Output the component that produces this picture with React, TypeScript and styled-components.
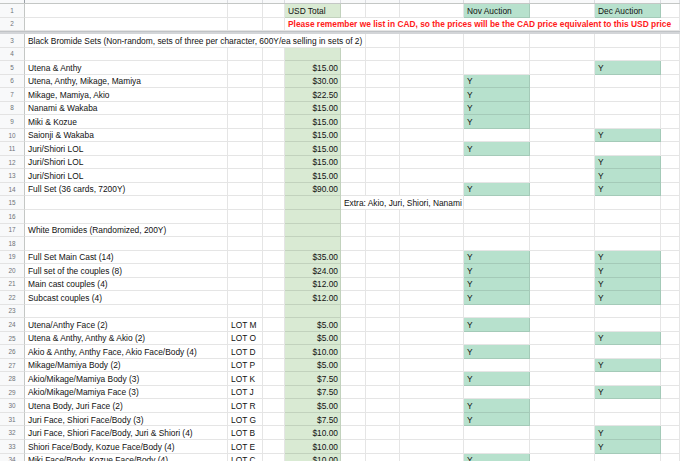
import React from "react";
import styled, { createGlobalStyle } from "styled-components";

const Global = createGlobalStyle`
  html, body { margin: 0; padding: 0; background: #fff; overflow: hidden; }
  * { box-sizing: border-box; }
`;

const COLS = "25px 203px 35px 22px 56px 25px 34px 64px 66px 65px 66px 1fr";
const ROW_H = 13.54;

const Sheet = styled.div`
  width: 680px;
  height: 461px;
  overflow: hidden;
  font-family: "Liberation Sans", Arial, sans-serif;
  font-size: 8.4px;
  color: #111;
`;

const ColHeader = styled.div`
  display: grid;
  grid-template-columns: ${COLS};
  height: 4px;
  background: #f8f9fa;
  border-bottom: 1px solid #c4c7c5;
`;

const ColHeadCell = styled.div<{ $corner?: boolean }>`
  border-right: 1px solid ${(p) => (p.$corner ? "#9aa0a6" : "#dadce0")};
`;

const Frozen = styled.div`
  height: 3px;
  background: #d3d5d8;
  border-top: 1px solid #c0c3c6;
`;

const Row = styled.div`
  display: grid;
  grid-template-columns: ${COLS};
  height: ${ROW_H}px;
`;

const RowNum = styled.div`
  background: #f8f9fa;
  border-right: 1px solid #c4c7c5;
  border-bottom: 1px solid #e3e3e3;
  color: #6f7378;
  font-size: 6.4px;
  display: flex;
  align-items: center;
  justify-content: center;
`;

const Cell = styled.div<{
  $bg?: string;
  $right?: boolean;
  $span?: number;
  $red?: boolean;
}>`
  grid-column: span ${(p) => p.$span ?? 1};
  background: ${(p) => p.$bg ?? "transparent"};
  border-right: 1px solid rgba(0, 0, 0, 0.1);
  border-bottom: 1px solid rgba(0, 0, 0, 0.1);
  padding: 1px 2px 0 3px;
  display: flex;
  align-items: center;
  justify-content: ${(p) => (p.$right ? "flex-end" : "flex-start")};
  white-space: nowrap;
  overflow: visible;
  line-height: 1;
  color: ${(p) => (p.$red ? "#ff1a1a" : "inherit")};
  font-weight: ${(p) => (p.$red ? 700 : 400)};
`;

const USD = "#d9ead3";
const MARK = "#b7e1cd";

type Item = {
  n: number;
  a?: string;
  b?: string;
  d?: string;
  nov?: boolean;
  dec?: boolean;
};

const items: Item[] = [
  { n: 4 },
  { n: 5, a: "Utena & Anthy", d: "$15.00", dec: true },
  { n: 6, a: "Utena, Anthy, Mikage, Mamiya", d: "$30.00", nov: true },
  { n: 7, a: "Mikage, Mamiya, Akio", d: "$22.50", nov: true },
  { n: 8, a: "Nanami & Wakaba", d: "$15.00", nov: true },
  { n: 9, a: "Miki & Kozue", d: "$15.00", nov: true },
  { n: 10, a: "Saionji & Wakaba", d: "$15.00", dec: true },
  { n: 11, a: "Juri/Shiori LOL", d: "$15.00", nov: true },
  { n: 12, a: "Juri/Shiori LOL", d: "$15.00", dec: true },
  { n: 13, a: "Juri/Shiori LOL", d: "$15.00", dec: true },
  { n: 14, a: "Full Set (36 cards, 7200Y)", d: "$90.00", nov: true, dec: true },
];

const items2: Item[] = [
  { n: 16 },
  { n: 17, a: "White Bromides (Randomized, 200Y)" },
  { n: 18 },
  { n: 19, a: "Full Set Main Cast (14)", d: "$35.00", nov: true, dec: true },
  { n: 20, a: "Full set of the couples (8)", d: "$24.00", nov: true, dec: true },
  { n: 21, a: "Main cast couples (4)", d: "$12.00", nov: true, dec: true },
  { n: 22, a: "Subcast couples (4)", d: "$12.00", nov: true, dec: true },
  { n: 23 },
  { n: 24, a: "Utena/Anthy Face (2)", b: "LOT M", d: "$5.00", nov: true },
  { n: 25, a: "Utena & Anthy, Anthy & Akio (2)", b: "LOT O", d: "$5.00", dec: true },
  { n: 26, a: "Akio & Anthy, Anthy Face, Akio Face/Body (4)", b: "LOT D", d: "$10.00", nov: true },
  { n: 27, a: "Mikage/Mamiya Body (2)", b: "LOT P", d: "$5.00", dec: true },
  { n: 28, a: "Akio/Mikage/Mamiya Body (3)", b: "LOT K", d: "$7.50", nov: true },
  { n: 29, a: "Akio/Mikage/Mamiya Face (3)", b: "LOT J", d: "$7.50", dec: true },
  { n: 30, a: "Utena Body, Juri Face (2)", b: "LOT R", d: "$5.00", nov: true },
  { n: 31, a: "Juri Face, Shiori Face/Body (3)", b: "LOT G", d: "$7.50", nov: true },
  { n: 32, a: "Juri Face, Shiori Face/Body, Juri & Shiori (4)", b: "LOT B", d: "$10.00", dec: true },
  { n: 33, a: "Shiori Face/Body, Kozue Face/Body (4)", b: "LOT E", d: "$10.00", dec: true },
  { n: 34, a: "Miki Face/Body, Kozue Face/Body (4)", b: "LOT C", d: "$10.00", nov: true },
];

function DataRow({ it }: { it: Item }) {
  return (
    <Row>
      <RowNum>{it.n}</RowNum>
      <Cell>{it.a}</Cell>
      <Cell>{it.b}</Cell>
      <Cell />
      <Cell $bg={USD} $right>
        {it.d}
      </Cell>
      <Cell />
      <Cell />
      <Cell />
      <Cell $bg={it.nov ? MARK : undefined}>{it.nov ? "Y" : ""}</Cell>
      <Cell />
      <Cell $bg={it.dec ? MARK : undefined}>{it.dec ? "Y" : ""}</Cell>
      <Cell />
    </Row>
  );
}

export default function App() {
  return (
    <>
      <Global />
      <Sheet>
        <ColHeader>
          <ColHeadCell $corner />
          {Array.from({ length: 11 }).map((_, i) => (
            <ColHeadCell key={i} />
          ))}
        </ColHeader>
        <Row>
          <RowNum>1</RowNum>
          <Cell />
          <Cell />
          <Cell />
          <Cell $bg={USD}>USD Total</Cell>
          <Cell />
          <Cell />
          <Cell />
          <Cell $bg={MARK}>Nov Auction</Cell>
          <Cell />
          <Cell $bg={MARK}>Dec Auction</Cell>
          <Cell />
        </Row>
        <Row>
          <RowNum>2</RowNum>
          <Cell />
          <Cell />
          <Cell />
          <Cell $span={8} $red>
            Please remember we list in CAD, so the prices will be the CAD price equivalent to this USD price
          </Cell>
        </Row>
        <Frozen />
        <Row>
          <RowNum>3</RowNum>
          <Cell $span={5}>
            Black Bromide Sets (Non-random, sets of three per character, 600Y/ea selling in sets of 2)
          </Cell>
          <Cell />
          <Cell />
          <Cell />
          <Cell />
          <Cell />
          <Cell />
        </Row>
        {items.map((it) => (
          <DataRow key={it.n} it={it} />
        ))}
        <Row>
          <RowNum>15</RowNum>
          <Cell />
          <Cell />
          <Cell />
          <Cell $bg={USD} />
          <Cell $span={3}>Extra: Akio, Juri, Shiori, Nanami</Cell>
          <Cell />
          <Cell />
          <Cell />
          <Cell />
        </Row>
        {items2.map((it) => (
          <DataRow key={it.n} it={it} />
        ))}
      </Sheet>
    </>
  );
}
